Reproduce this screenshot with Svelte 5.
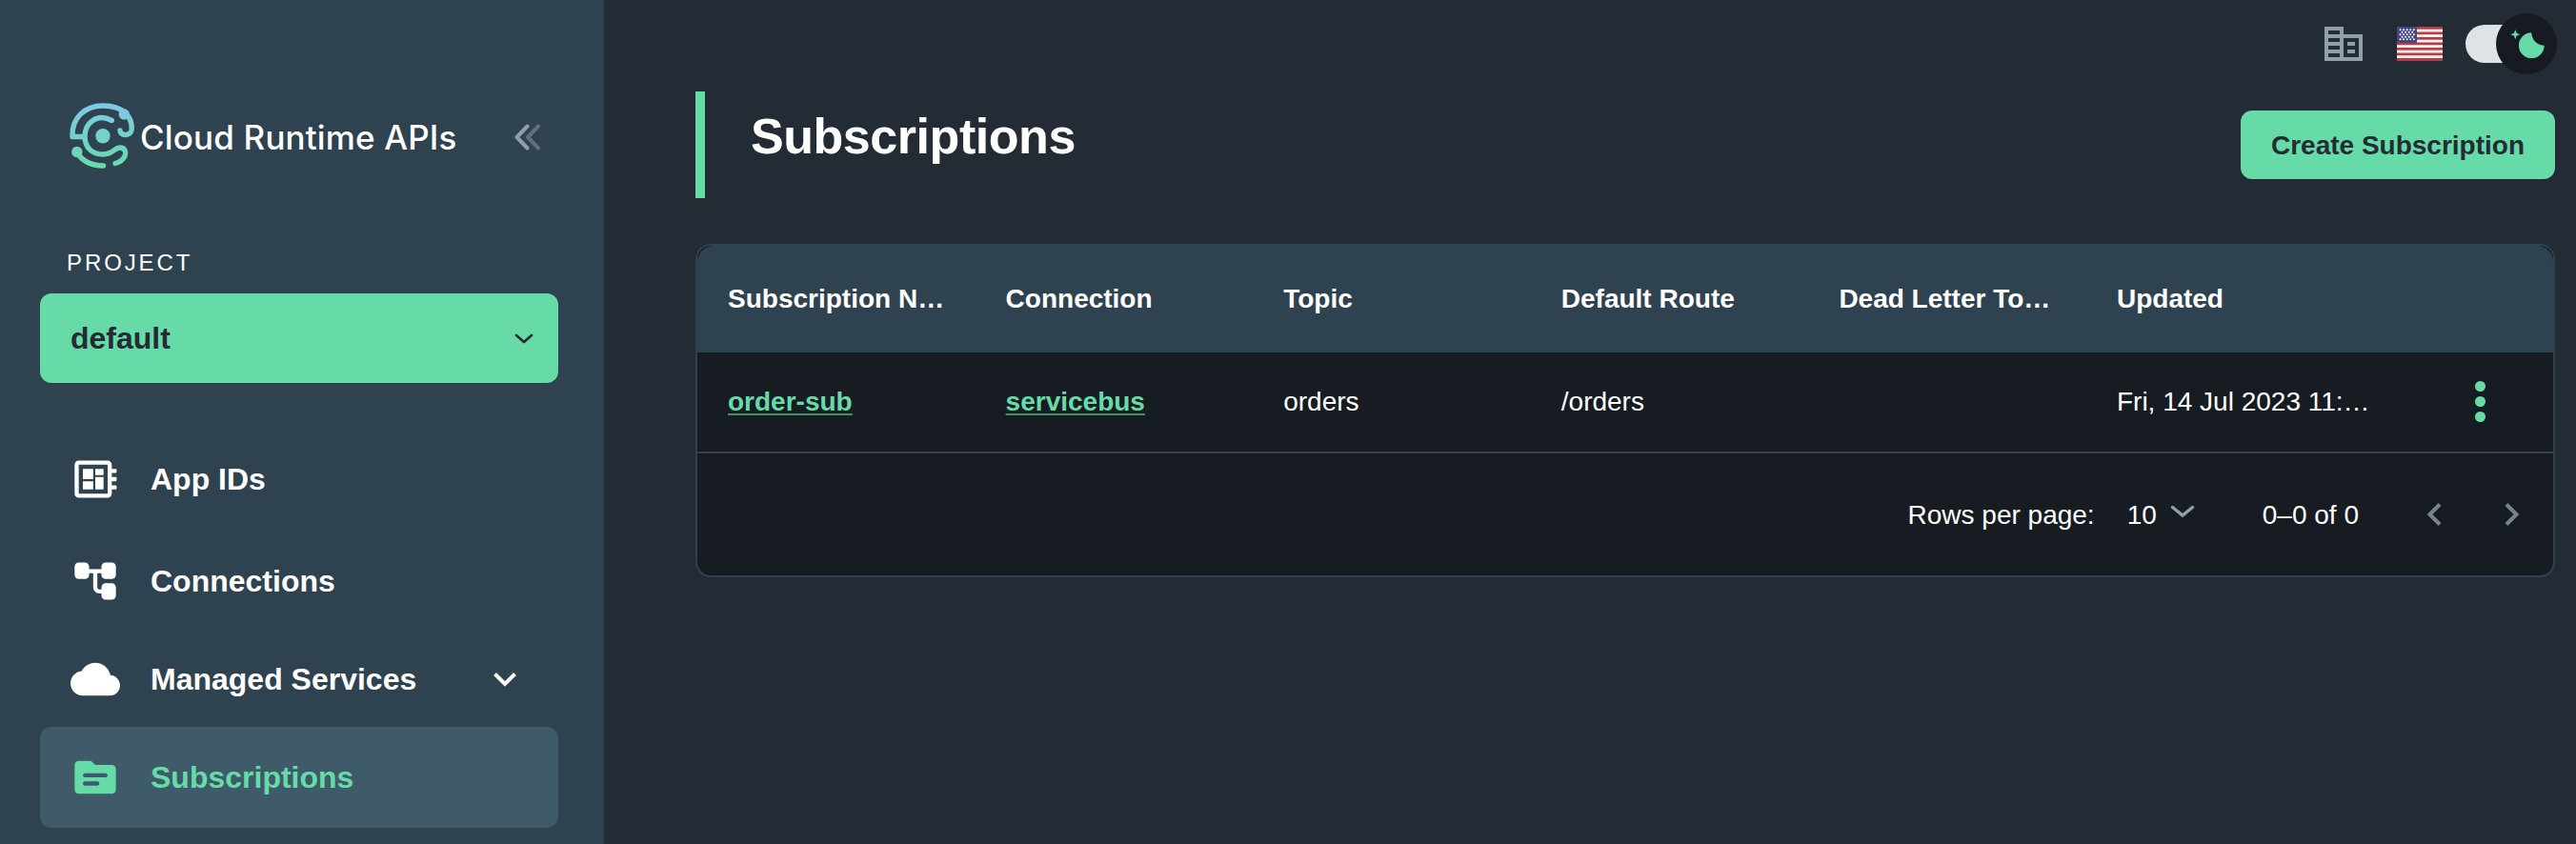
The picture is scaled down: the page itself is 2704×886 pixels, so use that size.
<script>
  const nav = [
    { label: 'App IDs', icon: 'app' },
    { label: 'Connections', icon: 'conn' },
    { label: 'Managed Services', icon: 'cloud', chevron: true },
    { label: 'Subscriptions', icon: 'sub', active: true }
  ];
  const columns = ['Subscription Name', 'Connection', 'Topic', 'Default Route', 'Dead Letter Topic', 'Updated'];
  const stars = [];
  for (let r = 0; r < 5; r++) {
    for (let c = 0; c < (r % 2 ? 4 : 5); c++) stars.push([3.5 + (r % 2 ? 2 : 0) + c * 3.6, 3.2 + r * 2.5]);
  }
</script>

<div class="page">
  <aside>
    <div class="brand">
      <svg class="logo" viewBox="60 95 100 95" width="100" height="95">
        <defs>
          <linearGradient id="lg" gradientUnits="userSpaceOnUse" x1="0" y1="108" x2="0" y2="177">
            <stop offset="0" stop-color="#80c8ea" />
            <stop offset="1" stop-color="#66dba8" />
          </linearGradient>
        </defs>
        <g fill="none" stroke="url(#lg)" stroke-width="5.4" stroke-linecap="round" stroke-linejoin="round">
          <path d="M117.300 126.500C101 118 89 130 89 143C89 157 99 162 108 162C119 162 120 155 126 155C132 155 132.500 161 131 164C129 168 125 170.500 121 171.500" />
          <path d="M88 143.500L76 143.500C75 124 89 111 108 111C119 111 127 114 132 119C138 125 139 133 138 137C136 143 126 143 126 137" />
          <path d="M80 159C86 169 96 174 108.500 174" />
        </g>
        <g fill="url(#lg)">
          <circle cx="108" cy="142.700" r="7.700" />
          <circle cx="130.300" cy="120" r="5.700" />
          <circle cx="80.800" cy="159.500" r="5.700" />
        </g>
      </svg>
      <span class="name">Cloud Runtime APIs</span>
      <svg class="collapse" viewBox="0 0 30 28" width="30" height="28" fill="none" stroke-width="4" stroke-linecap="round" stroke-linejoin="round">
        <path d="M26 2.500L15 14L26 25.500" stroke="#626f7f" />
        <path d="M14.500 2.500L3.500 14L14.500 25.500" stroke="#919eab" />
      </svg>
    </div>
    <div class="section">PROJECT</div>
    <div class="select">
      <span>default</span>
      <svg viewBox="0 0 20 11" width="20" height="11" fill="none" stroke="#242b34" stroke-width="2.700" stroke-linecap="round" stroke-linejoin="round"><path d="M2 2L10 9L18 2" /></svg>
    </div>
    <nav>
      {#each nav as n}
        <div class="item {n.icon}" class:active={n.active}>
          <svg class="ico" viewBox="0 0 24 24" width="52" height="52" fill="currentColor">
            {#if n.icon === 'app'}
              <path fill-rule="evenodd" d="M22 9c.5 0 .5-2 0-2h-2V5c0-1.100-.9-2-2-2H4c-1.100 0-2 .9-2 2v14c0 1.100.9 2 2 2h14c1.100 0 2-.9 2-2v-2h2c.5 0 .5-2 0-2h-2v-2h2c.5 0 .5-2 0-2h-2V9h2zm-4 10H4V5h14v14zM6 13h5v4H6v-4zm6-6h4v3h-4V7zM6 7h5v5H6V7zm6 4h4v6h-4v-6z" />
            {:else if n.icon === 'conn'}
              <path d="M15 5v1.200H9V5c0-1.100-.9-2-2-2H4c-1.100 0-2 .9-2 2v4c0 1.100.9 2 2 2h3c1.100 0 2-.9 2-2v-.8h2V15.010c0 1.640 1.340 2.990 2.990 2.990H15v1c0 1.100.9 2 2 2h3c1.100 0 2-.9 2-2v-4c0-1.100-.9-2-2-2h-3c-1.100 0-2 .9-2 2v1h-1.010c-.54 0-.99-.45-.99-.99V8.200h2V9c0 1.100.9 2 2 2h3c1.100 0 2-.9 2-2V5c0-1.100-.9-2-2-2h-3c-1.100 0-2 .9-2 2z" />
            {:else if n.icon === 'cloud'}
              <path d="M19.350 10.040C18.670 6.590 15.640 4 12 4 9.110 4 6.600 5.640 5.350 8.040 2.340 8.360 0 10.910 0 14c0 3.310 2.690 6 6 6h13c2.760 0 5-2.240 5-5 0-2.640-2.050-4.780-4.650-4.960z" />
            {:else}
              <path fill-rule="evenodd" d="M20 6h-8l-1.410-1.410C10.210 4.210 9.700 4 9.170 4H4c-1.100 0-2 .9-2 2v12c0 1.100.9 2 2 2h16c1.100 0 2-.9 2-2V8c0-1.100-.9-2-2-2zm-7 10H7c-.55 0-1-.45-1-1s.45-1 1-1h6c.55 0 1 .45 1 1s-.45 1-1 1zm4-4H7c-.55 0-1-.45-1-1s.45-1 1-1h10c.55 0 1 .45 1 1s-.45 1-1 1z" />
            {/if}
          </svg>
          <span>{n.label}</span>
          {#if n.chevron}
            <svg class="chev" viewBox="0 0 24 15" width="24" height="15" fill="none" stroke="#fff" stroke-width="4"><path d="M1.500 1.500L12 12L22.500 1.500" /></svg>
          {/if}
        </div>
      {/each}
    </nav>
  </aside>

  <main>
    <div class="tools">
      <svg viewBox="0 0 40 36" width="40" height="36" fill="#919eab"><path fill-rule="evenodd" d="M20 8V0H0v36h40V8H20zM16 32H4v-4h12v4zm0-8H4v-4h12v4zm0-8H4v-4h12v4zm0-8H4V4h12v4zm20 24H20V12h16v20zM32 16h-8v4h8v-4zm0 8h-8v4h8v-4z" /></svg>
      <svg class="flag" viewBox="0 0 48 36" width="48" height="36">
        <rect width="48" height="36" fill="#b83c42" />
        {#each [2.7, 8.200, 13.700, 19.200, 24.700, 30.200] as y}
          <rect {y} width="48" height="2.800" fill="#f6f2f3" />
        {/each}
        <rect width="21" height="17" fill="#45467f" />
        {#each stars as s}<circle cx={s[0]} cy={s[1]} r="1" fill="#fff" />{/each}
      </svg>
      <div class="toggle">
        <div class="thumb">
          <svg viewBox="0 0 64 64" width="64" height="64" fill="#66dba8">
            <path d="M37.300 20.300A13.400 13.400 0 1 0 50.700 33.700A13.400 13.400 0 0 1 37.300 20.300Z" />
            <path d="M20.300 17.200L21.700 20.800L25.300 22.200L21.700 23.600L20.300 27.200L18.900 23.600L15.300 22.200L18.900 20.800Z" />
          </svg>
        </div>
      </div>
    </div>
    <header>
      <h1>Subscriptions</h1>
      <button>Create Subscription</button>
    </header>
    <section class="table">
      <div class="row head">
        {#each columns as c}<div class="cell">{c}</div>{/each}
        <div></div>
      </div>
      <div class="row body">
        <div class="cell"><a>order-sub</a></div>
        <div class="cell"><a>servicebus</a></div>
        <div class="cell">orders</div>
        <div class="cell">/orders</div>
        <div class="cell"></div>
        <div class="cell">Fri, 14 Jul 2023 11:…</div>
        <div class="more"><i></i><i></i><i></i></div>
      </div>
      <div class="foot">
        <span class="rpp">Rows per page:</span>
        <span class="num">10</span>
        <svg class="down" viewBox="0 0 26 14" width="26" height="14" fill="none" stroke="#919eab" stroke-width="3.400" stroke-linecap="round"><path d="M2.500 2.500L13 11L23.500 2.500" /></svg>
        <span class="range">0–0 of 0</span>
        <svg class="prev" viewBox="0 0 16 24" width="16" height="24" fill="none" stroke="#79838f" stroke-width="4"><path d="M14 1.500L3.500 12L14 22.500" /></svg>
        <svg class="next" viewBox="0 0 16 24" width="16" height="24" fill="none" stroke="#79838f" stroke-width="4"><path d="M2 1.500L12.500 12L2 22.500" /></svg>
      </div>
    </section>
  </main>
</div>

<style>
  :global(body) { background: #232b34; overflow: hidden; }
  .page {
    display: flex; width: 2704px; height: 886px; overflow: hidden;
    font-family: "Liberation Sans", Arial, sans-serif; color: #fff; background: #232b34;
  }
  .page * { box-sizing: border-box; }
  svg { display: block; flex: none; }
  aside { width: 634px; flex: none; background: #2f424f; padding: 95px 48px 0 42px; }
  .brand { display: flex; align-items: center; height: 95px; padding-left: 18px; }
  .name { font-family: Inter, sans-serif; font-size: 35px; font-weight: 500; width: 340px; margin-left: -13px; padding-top: 3px; white-space: nowrap; letter-spacing: 0.150px; }
  .collapse { margin-left: 52px; margin-top: 3px; }
  .section { margin: 64px 0 0 28px; height: 43px; line-height: 43px; font-size: 24px; letter-spacing: 2.900px; }
  .select {
    height: 94px; background: #66dba8; border-radius: 12px; color: #242b34; font-weight: 700; font-size: 32px;
    display: flex; align-items: center; justify-content: space-between; padding: 0 26px 0 32px; margin-top: 11px;
  }
  nav { padding-top: 48px; }
  .item { height: 106px; border-radius: 12px; display: flex; align-items: center; padding-left: 32px; font-weight: 700; font-size: 32px; }
  .item span { margin-left: 32px; white-space: nowrap; }
  .conn { height: 107px; padding-top: 1px; }
  .cloud { height: 100px; }
  .chev { margin-left: auto; margin-right: 44px; }
  .active { background: #3f5b69; color: #66dba8; }
  main { flex: 1; padding: 14px 22px 0 96px; }
  .tools { height: 64px; display: flex; justify-content: flex-end; align-items: center; }
  .flag { margin-left: 36px; }
  .toggle { position: relative; width: 72px; height: 40px; margin-left: 24px; margin-right: 22px; border-radius: 20px; background: #dfe3e8; }
  .thumb { position: absolute; left: 32px; top: -12px; width: 64px; height: 64px; border-radius: 50%; background: #171b21; }
  header { display: flex; justify-content: space-between; margin-top: 18px; height: 112px; }
  h1 { margin: 0; border-left: 10px solid #66dba8; height: 112px; padding-left: 48px; font-size: 52px; line-height: 94px; letter-spacing: -0.450px; }
  button { margin-top: 20px; width: 330px; height: 72px; border: 0; border-radius: 12px; background: #66dba8; color: #242b34; font: 700 28px "Liberation Sans", Arial, sans-serif; padding: 2px 0 0; white-space: nowrap; }
  .table { margin-top: 48px; height: 350px; border: 2px solid #2f424f; border-radius: 16px; background: #171c22; overflow: hidden; }
  .row { display: grid; grid-template-columns: repeat(5, 291.6px) 340px 1fr; align-items: center; font-size: 28px; }
  .head { height: 112px; background: #2f424f; font-weight: 700; border-radius: 17px 17px 0 0; }
  .body { height: 106px; border-bottom: 2px solid #2f424f; }
  .cell { padding: 0 32px; height: 40px; line-height: 40px; white-space: nowrap; overflow: hidden; text-overflow: ellipsis; }
  a { color: #66dba8; font-weight: 700; text-decoration: underline; text-decoration-color: #46906f; text-decoration-thickness: 2px; text-underline-offset: 3px; }
  .more { display: flex; flex-direction: column; align-items: center; gap: 5px; padding: 0 2px 2px 0; }
  .more i { width: 11px; height: 11px; border-radius: 50%; background: #66dba8; }
  .foot { height: 128px; display: flex; align-items: center; justify-content: flex-end; padding-right: 35px; font-size: 28px; }
  .foot span { padding-top: 1px; }
  .num { margin-left: 34px; }
  .down { margin: 0 71px 6px 14px; }
  .prev { margin: 0 66px 1px 71px; }
  .next { margin-bottom: 1px; }
</style>
